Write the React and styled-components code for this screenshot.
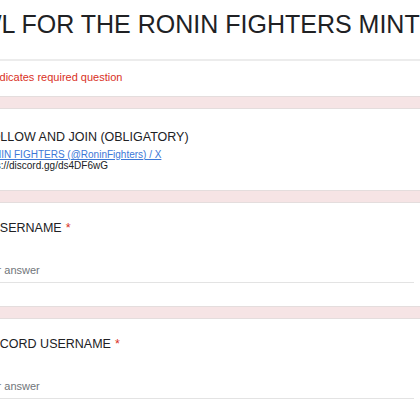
import React from "react";
import styled, { createGlobalStyle } from "styled-components";

const Global = createGlobalStyle`
  html, body { margin: 0; padding: 0; background: #f6e4e5; }
  body { font-family: "Liberation Sans", Arial, sans-serif; overflow: hidden; }
  #root { width: 420px; height: 420px; overflow: hidden; }
`;

const Page = styled.div`
  margin-left: -30px;
  width: 480px;
  display: flex;
  flex-direction: column;
  gap: 11px;
`;

const Card = styled.section`
  background: #ffffff;
  border: 1px solid #e4dddd;
  border-top: ${(p) => (p.$header ? "none" : "1px solid #e4dddd")};
  border-radius: ${(p) => (p.$header ? "0 0 8px 8px" : "8px")};
  padding: ${(p) => p.$pt}px 0 ${(p) => p.$pb}px 8px;
  display: flex;
  flex-direction: column;
`;

const FormTitle = styled.h1`
  margin: 0;
  font-size: 25px;
  line-height: 28px;
  font-weight: 400;
  color: #202124;
  white-space: nowrap;
  margin-left: -1px;
`;

const Divider = styled.div`
  height: 2px;
  background: #ececec;
  margin: 21px 0 0 -8px;
`;

const Required = styled.div`
  margin-top: 9px;
  font-size: 11px;
  line-height: 14px;
  color: #d93025;
  white-space: nowrap;
  margin-left: 4px;
`;

const SectionTitle = styled.div`
  font-size: 12.5px;
  line-height: 16px;
  color: #202124;
  white-space: nowrap;
  margin-left: ${(p) => p.$indent || 0}px;
`;

const Desc = styled.div`
  font-size: 10px;
  line-height: 11px;
  color: #202124;
  white-space: nowrap;
  margin-top: ${(p) => p.$mt || 0}px;
`;

const Link = styled.a`
  color: #3c78d8;
  text-decoration: underline;
`;

const Star = styled.span`
  color: #d93025;
  margin-left: 4px;
`;

const Answer = styled.div`
  margin-top: 27px;
  width: 435px;
  font-size: 11px;
  line-height: 14px;
  color: #70757a;
  padding-bottom: 5px;
  border-bottom: 1px solid #e3e3e3;
  white-space: nowrap;
`;

function Question({ label, pb }) {
  return (
    <Card $pt={17} $pb={pb}>
      <SectionTitle>
        {label}
        <Star>*</Star>
      </SectionTitle>
      <Answer>Your answer</Answer>
    </Card>
  );
}

export default function App() {
  return (
    <>
      <Global />
      <Page>
        <Card $header $pt={10} $pb={12}>
          <FormTitle>WL FOR THE RONIN FIGHTERS MINT</FormTitle>
          <Divider />
          <Required>* Indicates required question</Required>
        </Card>
        <Card $pt={20} $pb={19}>
          <SectionTitle $indent={4}>FOLLOW AND JOIN (OBLIGATORY)</SectionTitle>
          <Desc $mt={4}>
            <Link href="#">RONIN FIGHTERS (@RoninFighters) / X</Link>
          </Desc>
          <Desc>https://discord.gg/ds4DF6wG</Desc>
        </Card>
        <Question label="X USERNAME" pb={23} />
        <Question label="DISCORD USERNAME" pb={40} />
      </Page>
    </>
  );
}
